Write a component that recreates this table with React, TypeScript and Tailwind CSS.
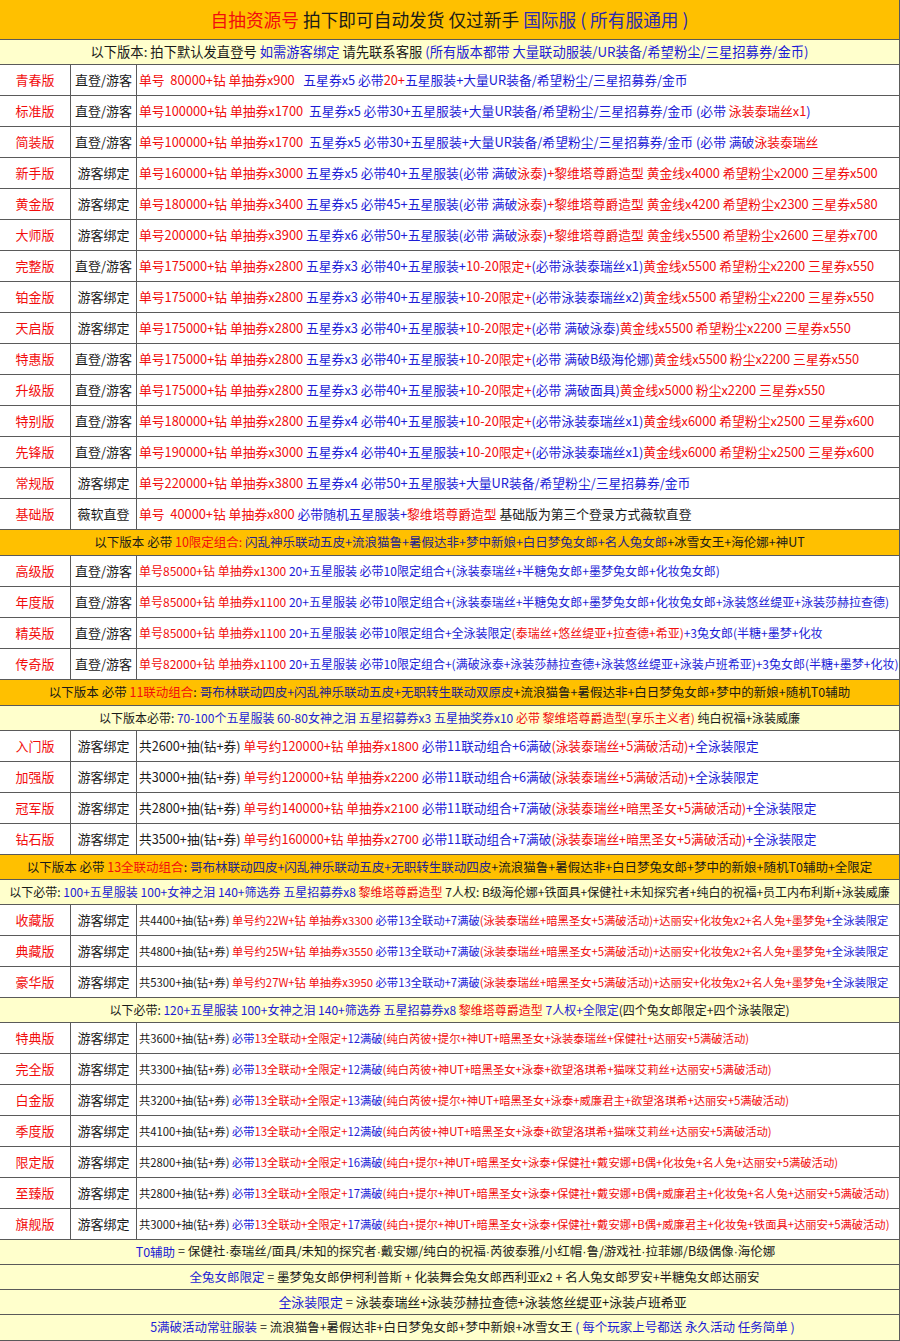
import React from "react";

type Seg = [string, string];
const C: Record<string, string> = {
  r: "text-[#f20d0d]",
  b: "text-[#1c1cd6]",
  k: "text-[#1a1a1a]",
  n: "text-[#23238f]",
};

function Segs({ segs }: { segs: Seg[] }) {
  return (
    <>
      {segs.map(([c, t], i) => (
        <span key={i} className={C[c]}>
          {t.split("·").map((p, j) =>
            j === 0 ? (
              <React.Fragment key={j}>{p}</React.Fragment>
            ) : (
              <React.Fragment key={j}>
                <span style={{ fontFamily: '"Liberation Sans", sans-serif' }}>·</span>
                {p}
              </React.Fragment>
            )
          )}
        </span>
      ))}
    </>
  );
}

type Row = { label: string; login: string; segs: Seg[]; size?: string };

function DataRow({ row }: { row: Row }) {
  return (
    <div className="grid grid-cols-[71px_66px_1fr] h-[31px] border-b border-[#5a5a5a] bg-white">
      <div className="flex items-center justify-center border-r border-[#5a5a5a] text-[13px] text-[#f20d0d]">
        {row.label}
      </div>
      <div className="flex items-center justify-center border-r border-[#5a5a5a] text-[13px] text-[#1a1a1a]">
        {row.login}
      </div>
      <div className={"flex items-center pl-[2px] whitespace-pre overflow-hidden " + (row.size ?? "text-[12.8px]")}>
        <Segs segs={row.segs} />
      </div>
    </div>
  );
}

function Band({
  segs,
  tone,
  h,
  size,
  extra = "",
}: {
  segs: Seg[];
  tone: "o" | "y";
  h: string;
  size: string;
  extra?: string;
}) {
  return (
    <div
      className={
        "flex items-center justify-center whitespace-pre border-b border-[#5a5a5a] " +
        h +
        " " +
        size +
        " " +
        extra +
        " " +
        (tone === "o" ? "bg-[#ffc000]" : "bg-[#ffffcc]")
      }
    >
      <Segs segs={segs} />
    </div>
  );
}

const group1: Row[] = [
  { label: "青春版", login: "直登/游客", segs: [["r", "单号  80000+钻 单抽券x900"], ["b", "   五星券x5 必带"], ["r", "20+"], ["b", "五星服装+大量UR装备/希望粉尘/三星招募券/金币"]] },
  { label: "标准版", login: "直登/游客", segs: [["r", "单号100000+钻 单抽券x1700"], ["b", "  五星券x5 必带30+五星服装+大量UR装备/希望粉尘/三星招募券/金币 (必带 "], ["r", "泳装泰瑞丝x1"], ["b", ")"]] },
  { label: "简装版", login: "直登/游客", segs: [["r", "单号100000+钻 单抽券x1700"], ["b", "  五星券x5 必带30+五星服装+大量UR装备/希望粉尘/三星招募券/金币 (必带 满破"], ["r", "泳装泰瑞丝"]] },
  { label: "新手版", login: "游客绑定", segs: [["r", "单号160000+钻 单抽券x3000"], ["b", " 五星券x5 必带40+五星服装(必带 满破"], ["r", "泳泰"], ["b", ")"], ["r", "+黎维塔尊爵造型 黄金线x4000 希望粉尘x2000 三星券x500"]] },
  { label: "黄金版", login: "游客绑定", segs: [["r", "单号180000+钻 单抽券x3400"], ["b", " 五星券x5 必带45+五星服装(必带 满破"], ["r", "泳泰"], ["b", ")"], ["r", "+黎维塔尊爵造型 黄金线x4200 希望粉尘x2300 三星券x580"]] },
  { label: "大师版", login: "游客绑定", segs: [["r", "单号200000+钻 单抽券x3900"], ["b", " 五星券x6 必带50+五星服装(必带 满破"], ["r", "泳泰"], ["b", ")"], ["r", "+黎维塔尊爵造型 黄金线x5500 希望粉尘x2600 三星券x700"]] },
  { label: "完整版", login: "直登/游客", segs: [["r", "单号175000+钻 单抽券x2800"], ["b", " 五星券x3 必带40+五星服装+"], ["r", "10-20限定+"], ["b", "(必带泳装泰瑞丝x1)"], ["r", "黄金线x5500 希望粉尘x2200 三星券x550"]] },
  { label: "铂金版", login: "游客绑定", segs: [["r", "单号175000+钻 单抽券x2800"], ["b", " 五星券x3 必带40+五星服装+"], ["r", "10-20限定+"], ["b", "(必带泳装泰瑞丝x2)"], ["r", "黄金线x5500 希望粉尘x2200 三星券x550"]] },
  { label: "天启版", login: "游客绑定", segs: [["r", "单号175000+钻 单抽券x2800"], ["b", " 五星券x3 必带40+五星服装+"], ["r", "10-20限定+"], ["b", "(必带 满破泳泰)"], ["r", "黄金线x5500 希望粉尘x2200 三星券x550"]] },
  { label: "特惠版", login: "直登/游客", segs: [["r", "单号175000+钻 单抽券x2800"], ["b", " 五星券x3 必带40+五星服装+"], ["r", "10-20限定+"], ["b", "(必带 满破B级海伦娜)"], ["r", "黄金线x5500 粉尘x2200 三星券x550"]] },
  { label: "升级版", login: "直登/游客", segs: [["r", "单号175000+钻 单抽券x2800"], ["b", " 五星券x3 必带40+五星服装+"], ["r", "10-20限定+"], ["b", "(必带 满破面具)"], ["r", "黄金线x5000 粉尘x2200 三星券x550"]] },
  { label: "特别版", login: "直登/游客", segs: [["r", "单号180000+钻 单抽券x2800"], ["b", " 五星券x4 必带40+五星服装+"], ["r", "10-20限定+"], ["b", "(必带泳装泰瑞丝x1)"], ["r", "黄金线x6000 希望粉尘x2500 三星券x600"]] },
  { label: "先锋版", login: "直登/游客", segs: [["r", "单号190000+钻 单抽券x3000"], ["b", " 五星券x4 必带40+五星服装+"], ["r", "10-20限定+"], ["b", "(必带泳装泰瑞丝x1)"], ["r", "黄金线x6000 希望粉尘x2500 三星券x600"]] },
  { label: "常规版", login: "游客绑定", segs: [["r", "单号220000+钻 单抽券x3800"], ["b", " 五星券x4 必带50+五星服装+大量UR装备/希望粉尘/三星招募券/金币"]] },
  { label: "基础版", login: "薇软直登", segs: [["r", "单号  40000+钻 单抽券x800"], ["b", " 必带随机五星服装+"], ["r", "黎维塔尊爵造型"], ["k", " 基础版为第三个登录方式薇软直登"]] },
];

const group2: Row[] = [
  { label: "高级版", login: "直登/游客", size: "text-[12px]", segs: [["r", "单号85000+钻 单抽券x1300"], ["b", " 20+五星服装 必带10限定组合+(泳装泰瑞丝+半糖兔女郎+墨梦兔女郎+化妆兔女郎)"]] },
  { label: "年度版", login: "直登/游客", size: "text-[12px]", segs: [["r", "单号85000+钻 单抽券x1100"], ["b", " 20+五星服装 必带10限定组合+(泳装泰瑞丝+半糖兔女郎+墨梦兔女郎+化妆兔女郎+泳装悠丝缇亚+泳装莎赫拉查德)"]] },
  { label: "精英版", login: "直登/游客", size: "text-[12px]", segs: [["r", "单号85000+钻 单抽券x1100"], ["b", " 20+五星服装 必带10限定组合+全泳装限定"], ["r", "(泰瑞丝+悠丝缇亚+拉查德+希亚)"], ["b", "+3兔女郎(半糖+墨梦+化妆"]] },
  { label: "传奇版", login: "直登/游客", size: "text-[12px]", segs: [["r", "单号82000+钻 单抽券x1100"], ["b", " 20+五星服装 必带10限定组合+(满破泳泰+泳装莎赫拉查德+泳装悠丝缇亚+泳装卢班希亚)+3兔女郎(半糖+墨梦+化妆)"]] },
];

const g3 = (label: string, total: string, num: string, x: string, po: string, inner: string): Row => ({
  label,
  login: "游客绑定",
  size: "text-[12.7px]",
  segs: [["k", `共${total}+抽(钻+券)`], ["r", ` 单号约${num}+钻 单抽券x${x}`], ["b", ` 必带11联动组合+${po}满破`], ["r", inner], ["b", "+全泳装限定"]],
});

const group3: Row[] = [
  g3("入门版", "2600", "120000", "1800", "6", "(泳装泰瑞丝+5满破活动)"),
  g3("加强版", "3000", "120000", "2200", "6", "(泳装泰瑞丝+5满破活动)"),
  g3("冠军版", "2800", "140000", "2100", "7", "(泳装泰瑞丝+暗黑圣女+5满破活动)"),
  g3("钻石版", "3500", "160000", "2700", "7", "(泳装泰瑞丝+暗黑圣女+5满破活动)"),
];

const g4 = (label: string, total: string, w: string, x: string): Row => ({
  label,
  login: "游客绑定",
  size: "text-[11.3px]",
  segs: [
    ["k", `共${total}+抽(钻+券)`],
    ["r", ` 单号约${w}+钻 单抽券x${x}`],
    ["b", " 必带13全联动+7满破"],
    ["r", "(泳装泰瑞丝+暗黑圣女+5满破活动)+达丽安+化妆兔x2+名人兔+墨梦兔"],
    ["b", "+全泳装限定"],
  ],
});

const group4: Row[] = [
  g4("收藏版", "4400", "22W", "3300"),
  g4("典藏版", "4800", "25W", "3550"),
  g4("豪华版", "5300", "27W", "3950"),
];

const g5 = (label: string, total: string, po: string, inner: string): Row => ({
  label,
  login: "游客绑定",
  size: "text-[11.3px]",
  segs: [
    ["k", `共${total}+抽(钻+券)`],
    ["b", " 必带"],
    ["r", "13全联动+全限定+"],
    ["b", `${po}满破`],
    ["r", inner],
  ],
});

const group5: Row[] = [
  g5("特典版", "3600", "12", "(纯白芮彼+提尔+神UT+暗黑圣女+泳装泰瑞丝+保健社+达丽安+5满破活动)"),
  g5("完全版", "3300", "12", "(纯白芮彼+神UT+暗黑圣女+泳泰+欲望洛琪希+猫咪艾莉丝+达丽安+5满破活动)"),
  g5("白金版", "3200", "13", "(纯白芮彼+提尔+神UT+暗黑圣女+泳泰+威廉君主+欲望洛琪希+达丽安+5满破活动)"),
  g5("季度版", "4100", "12", "(纯白芮彼+神UT+暗黑圣女+泳泰+欲望洛琪希+猫咪艾莉丝+达丽安+5满破活动)"),
  g5("限定版", "2800", "16", "(纯白+提尔+神UT+暗黑圣女+泳泰+保健社+戴安娜+B偶+化妆兔+名人兔+达丽安+5满破活动)"),
  g5("至臻版", "2800", "17", "(纯白+提尔+神UT+暗黑圣女+泳泰+保健社+戴安娜+B偶+威廉君主+化妆兔+名人兔+达丽安+5满破活动)"),
  g5("旗舰版", "3000", "17", "(纯白+提尔+神UT+暗黑圣女+泳泰+保健社+戴安娜+B偶+威廉君主+化妆兔+铁面具+达丽安+5满破活动)"),
];

export default function App() {
  return (
    <div
      className="w-[900px] bg-white border-r border-[#5a5a5a]"
      style={{ fontFamily: '"Noto Sans CJK SC", "Noto Sans", sans-serif' }}
    >
      <div className="h-[40px] flex items-center justify-center bg-[#ffc000] border-b border-[#5a5a5a] text-[17.7px] whitespace-pre">
        <span className="text-[#f20d0d]">自抽资源号</span>
        <span className="text-[#1a1a1a]"> 拍下即可自动发货 仅过新手 </span>
        <span className="text-[#2b2bb0]">国际服 ( 所有服通用 )</span>
      </div>
      <Band
        tone="y"
        h="h-[25px]"
        size="text-[13.3px]"
        segs={[
          ["k", "以下版本: 拍下默认发直登号 "],
          ["b", "如需游客绑定"],
          ["k", " 请先联系客服 "],
          ["b", "(所有版本都带 大量联动服装/UR装备/希望粉尘/三星招募券/金币)"],
        ]}
      />
      {group1.map((r) => (
        <DataRow key={r.label} row={r} />
      ))}
      <Band
        tone="o"
        h="h-[26px]"
        size="text-[12.5px]"
        segs={[
          ["k", "以下版本 必带 "],
          ["r", "10限定组合: "],
          ["n", "闪乱神乐联动五皮+流浪猫鲁+暑假达非+梦中新娘+白日梦兔女郎+名人兔女郎"],
          ["k", "+冰雪女王+海伦娜+神UT"],
        ]}
      />
      {group2.map((r) => (
        <DataRow key={r.label} row={r} />
      ))}
      <Band
        tone="o"
        h="h-[26px]"
        size="text-[12.5px]"
        segs={[
          ["k", "以下版本 必带 "],
          ["r", "11联动组合"],
          ["k", ": "],
          ["n", "哥布林联动四皮+闪乱神乐联动五皮+无职转生联动双原皮"],
          ["k", "+流浪猫鲁+暑假达非+白日梦兔女郎+梦中的新娘+随机T0辅助"],
        ]}
      />
      <Band
        tone="y"
        h="h-[25px]"
        size="text-[12px]"
        segs={[
          ["k", "以下版本必带: "],
          ["b", "70-100个五星服装 60-80女神之泪 五星招募券x3 五星抽奖券x10"],
          ["r", " 必带 黎维塔尊爵造型(享乐主义者)"],
          ["k", " 纯白祝福+泳装威廉"],
        ]}
      />
      {group3.map((r) => (
        <DataRow key={r.label} row={r} />
      ))}
      <Band
        tone="o"
        h="h-[25px]"
        size="text-[12.5px]"
        segs={[
          ["k", "以下版本 必带 "],
          ["r", "13全联动组合"],
          ["k", ": "],
          ["n", "哥布林联动四皮+闪乱神乐联动五皮+无职转生联动四皮"],
          ["k", "+流浪猫鲁+暑假达非+白日梦兔女郎+梦中的新娘+随机T0辅助+全限定"],
        ]}
      />
      <Band
        tone="y"
        h="h-[25px]"
        size="text-[12px]"
        segs={[
          ["k", "以下必带: "],
          ["b", "100+五星服装 100+女神之泪 140+筛选券 五星招募券x8"],
          ["r", " 黎维塔尊爵造型"],
          ["k", " 7人权: B级海伦娜+铁面具+保健社+未知探究者+纯白的祝福+员工内布利斯+泳装威廉"],
        ]}
      />
      {group4.map((r) => (
        <DataRow key={r.label} row={r} />
      ))}
      <Band
        tone="y"
        h="h-[25px]"
        size="text-[12px]"
        segs={[
          ["k", "以下必带: "],
          ["b", "120+五星服装 100+女神之泪 140+筛选券 五星招募券x8"],
          ["r", " 黎维塔尊爵造型"],
          ["b", " 7人权+全限定"],
          ["k", "(四个兔女郎限定+四个泳装限定)"],
        ]}
      />
      {group5.map((r) => (
        <DataRow key={r.label} row={r} />
      ))}
      <Band
        tone="y"
        h="h-[25px]"
        size="text-[12.5px]"
        extra="pl-[12px]"
        segs={[
          ["b", "T0辅助"],
          ["k", " = 保健社·泰瑞丝/面具/未知的探究者·戴安娜/纯白的祝福·芮彼泰雅/小红帽·鲁/游戏社·拉菲娜/B级偶像·海伦娜"],
        ]}
      />
      <Band
        tone="y"
        h="h-[25px]"
        size="text-[12.5px]"
        extra="pl-[50px]"
        segs={[
          ["b", "全兔女郎限定"],
          ["k", " = 墨梦兔女郎伊柯利普斯 + 化装舞会兔女郎西利亚x2 + 名人兔女郎罗安+半糖兔女郎达丽安"],
        ]}
      />
      <Band
        tone="y"
        h="h-[25px]"
        size="text-[12.9px]"
        extra="pl-[66px]"
        segs={[
          ["b", "全泳装限定"],
          ["k", " = 泳装泰瑞丝+泳装莎赫拉查德+泳装悠丝缇亚+泳装卢班希亚"],
        ]}
      />
      <Band
        tone="y"
        h="h-[26px]"
        size="text-[12.5px]"
        extra="pl-[46px]"
        segs={[
          ["b", "5满破活动常驻服装"],
          ["k", " = 流浪猫鲁+暑假达非+白日梦兔女郎+梦中新娘+冰雪女王 "],
          ["b", "( 每个玩家上号都送 永久活动 任务简单 )"],
        ]}
      />
    </div>
  );
}
